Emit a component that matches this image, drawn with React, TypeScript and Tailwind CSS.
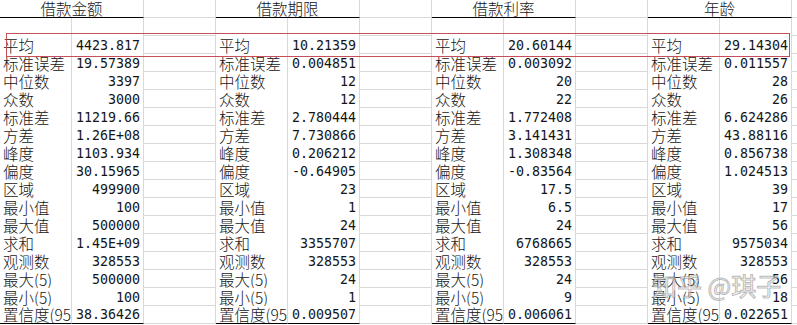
const groups = [
  {
    title: "借款金额",
    values: ["4423.817", "19.57389", "3397", "3000", "11219.66", "1.26E+08", "1103.934", "30.15965", "499900", "100", "500000", "1.45E+09", "328553", "500000", "100", "38.36426"],
  },
  {
    title: "借款期限",
    values: ["10.21359", "0.004851", "12", "12", "2.780444", "7.730866", "0.206212", "-0.64905", "23", "1", "24", "3355707", "328553", "24", "1", "0.009507"],
  },
  {
    title: "借款利率",
    values: ["20.60144", "0.003092", "20", "22", "1.772408", "3.141431", "1.308348", "-0.83564", "17.5", "6.5", "24", "6768665", "328553", "24", "9", "0.006061"],
  },
  {
    title: "年龄",
    values: ["29.14304", "0.011557", "28", "26", "6.624286", "43.88116", "0.856738", "1.024513", "39", "17", "56", "9575034", "328553", "56", "18", "0.022651"],
  },
];

const labels = ["平均", "标准误差", "中位数", "众数", "标准差", "方差", "峰度", "偏度", "区域", "最小值", "最大值", "求和", "观测数", "最大(5)", "最小(5)", "置信度(95.0%)"];

// empty spacer column between the stat blocks, only it shows row gridlines
function Gap() {
  return <div className="h-full w-[72px] shrink-0 border-r border-b border-[#d9d9d9]" />;
}

export default function App() {
  return (
    <div className="relative h-[325px] w-[797px] overflow-hidden bg-white text-[#151515] font-['Noto_Sans_CJK_SC',sans-serif]">
      {/* header row */}
      <div className="flex h-[18px]">
        {groups.map((g) => (
          <div key={g.title} className="flex h-full">
            <div className="flex h-full w-[144px] shrink-0 items-end justify-center border-r border-b border-r-[#d9d9d9] border-b-black text-[15.5px] font-light leading-[17px]">
              {g.title}
            </div>
            <Gap />
          </div>
        ))}
        <div className="h-full flex-1 border-b border-[#d9d9d9]" />
      </div>

      {/* blank row */}
      <div className="flex h-[18px]">
        {groups.map((g) => (
          <div key={g.title} className="flex h-full">
            <div className="h-full w-[72px] shrink-0 border-r border-[#d9d9d9]" />
            <div className="h-full w-[72px] shrink-0 border-r border-[#d9d9d9]" />
            <Gap />
          </div>
        ))}
        <div className="h-full flex-1 border-b border-[#d9d9d9]" />
      </div>

      {labels.map((label, i) => {
        const last = i === labels.length - 1;
        return (
          <div key={label} className="flex h-[18px]">
            {groups.map((g) => (
              <div key={g.title} className="flex h-full">
                <div
                  className={`flex h-full w-[72px] shrink-0 items-end overflow-hidden whitespace-nowrap border-r border-r-[#d9d9d9] pl-[3px] text-[15.5px] font-light leading-[17px] ${last ? "border-b border-b-black" : ""}`}
                >
                  {label}
                </div>
                <div
                  className={`flex h-full w-[72px] shrink-0 items-end justify-end overflow-hidden whitespace-nowrap border-r border-r-[#d9d9d9] pr-[3px] font-['DejaVu_Sans_Mono',monospace] text-[13.3px] leading-[16px] ${last ? "border-b border-b-black" : ""}`}
                >
                  {g.values[i]}
                </div>
                <Gap />
              </div>
            ))}
            <div className="h-full flex-1 border-b border-[#d9d9d9]" />
          </div>
        );
      })}

      {/* selection box around the mean row */}
      <div className="absolute left-[6px] top-[33px] h-[24px] w-[784px] border border-[#c4505c]" />

      {/* watermark */}
      <div className="absolute left-[652px] top-[268px] whitespace-nowrap text-[25px] leading-[34px] text-[rgba(255,255,255,0.55)] [-webkit-text-stroke:1px_rgba(140,140,140,0.6)]">
        知乎 @琪子
      </div>
    </div>
  );
}
